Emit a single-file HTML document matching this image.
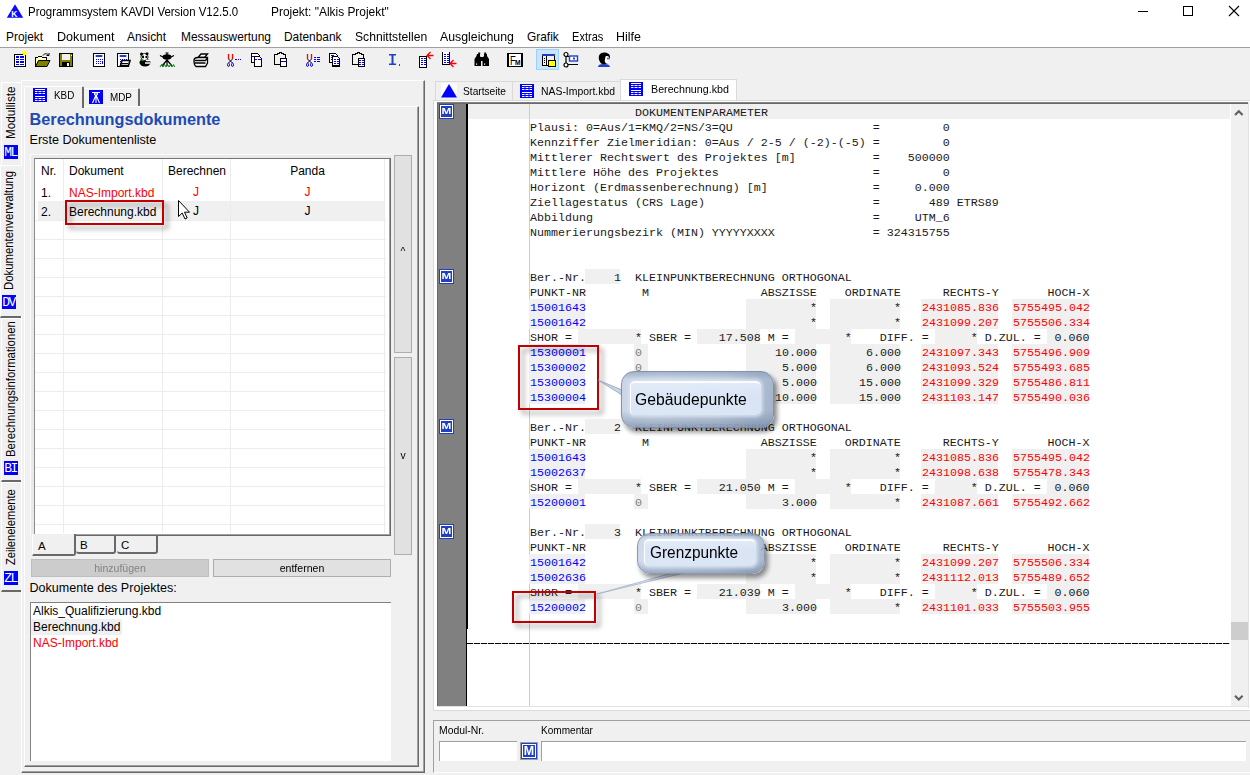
<!DOCTYPE html>
<html lang="de"><head><meta charset="utf-8"><title>Programmsystem KAVDI</title>
<style>
*{box-sizing:border-box;margin:0;padding:0}
html,body{width:1250px;height:775px;overflow:hidden;background:#f0f0f0}
body{position:relative;font-family:"Liberation Sans",sans-serif;font-size:12px;color:#000}
.a{position:absolute}
.t{position:absolute;white-space:pre;line-height:1}
.m{font-family:"Liberation Mono",monospace;font-size:11.667px;line-height:15px;white-space:pre;position:absolute;left:530px;height:15px;color:#1a1a1a}
.ms{font-size:11.5px;transform:scaleX(.897);transform-origin:0 0}
.msc{transform-origin:50% 0}
.g{position:absolute;background:#f0f0f0;height:15px}
.b{color:#0000ff}.r{color:#ff0000}.gr{color:#808080}
.hl{position:absolute;height:1px;background:#ececec}
.vl{position:absolute;width:1px;background:#ececec}
</style></head>
<body>
<div class="a" style="left:0;top:0;width:1250px;height:47px;background:#fff"></div>
<div class="a" style="left:0;top:47px;width:1250px;height:1px;background:#a0a0a0"></div>
<svg class="a" style="left:6px;top:4px" width="18" height="15" viewBox="0 0 18 15"><path d="M9 0.300 L17.200 13.800 L0.800 13.800 Z" fill="#0a0aff"/><text x="5.300" y="13" font-family="Liberation Sans,sans-serif" font-size="8.500" font-weight="bold" fill="#fff">K</text></svg>
<div class="t" style="left:28px;top:6px;font-size:12px;transform-origin:0 0;transform:scaleX(.953)">Programmsystem KAVDI Version V12.5.0</div>
<div class="t" style="left:271px;top:6px;font-size:12px;transform-origin:0 0;transform:scaleX(.993)">Projekt: "Alkis Projekt"</div>
<svg class="a" style="left:1130px;top:0" width="120" height="24" viewBox="0 0 120 24"><path d="M8 11.500h10" stroke="#000" fill="none"/><rect x="53.500" y="6.500" width="9" height="9" stroke="#000" fill="none"/><path d="M99 6l10 10M109 6L99 16" stroke="#000" stroke-width="1.100" fill="none"/></svg>
<div class="t" style="left:6px;top:31.5px;font-size:11.9px">Projekt</div>
<div class="t" style="left:57px;top:31.5px;font-size:11.9px;transform-origin:0 0;transform:scaleX(1.06)">Dokument</div>
<div class="t" style="left:127px;top:31.5px;font-size:11.9px">Ansicht</div>
<div class="t" style="left:181px;top:31.5px;font-size:11.9px">Messauswertung</div>
<div class="t" style="left:284px;top:31.5px;font-size:11.9px">Datenbank</div>
<div class="t" style="left:355px;top:31.5px;font-size:11.9px;transform-origin:0 0;transform:scaleX(1.02)">Schnittstellen</div>
<div class="t" style="left:440px;top:31.5px;font-size:11.9px;transform-origin:0 0;transform:scaleX(1.035)">Ausgleichung</div>
<div class="t" style="left:527px;top:31.5px;font-size:11.9px">Grafik</div>
<div class="t" style="left:572px;top:31.5px;font-size:11.9px;transform-origin:0 0;transform:scaleX(0.93)">Extras</div>
<div class="t" style="left:616px;top:31.5px;font-size:11.9px;transform-origin:0 0;transform:scaleX(1.05)">Hilfe</div>
<svg class="a" style="left:13px;top:51px" width="16" height="17" viewBox="0 0 16 17" shape-rendering="crispEdges"><rect x="1.500" y="3.500" width="11" height="12" fill="#fff" stroke="#000"/><path d="M3 6h3M7 6h4M3 8.500h3M7 8.500h4M3 11h3M7 11h4M3 13.500h3M7 13.500h4" stroke="#0000ff" stroke-width="1.300"/><path d="M11.5 0v5M9 2.5h5M9.5 0.5l4 4M13.5 0.5l-4 4" stroke="#ffff00" shape-rendering="auto"/></svg>
<svg class="a" style="left:35px;top:51px" width="16" height="17" viewBox="0 0 16 17" shape-rendering="crispEdges"><path d="M0.5 15.5V6.5h2l1-1h3l1 1h4v3" fill="#ffffc0" stroke="#000"/><path d="M0.5 15.5l3-6h11.5l-3 6z" fill="#808000" stroke="#000" shape-rendering="auto"/><path d="M8 4.5c1-2 4-2.500 5.500-0.500M14 2v2.500h-2.500" fill="none" stroke="#000" shape-rendering="auto"/></svg>
<svg class="a" style="left:58px;top:51px" width="16" height="17" viewBox="0 0 16 17" shape-rendering="crispEdges"><rect x="1.500" y="2.500" width="13" height="13" fill="#808000" stroke="#000"/><rect x="4" y="3" width="8" height="6" fill="#f0f0f0"/><rect x="4" y="11" width="8" height="4" fill="#000"/><rect x="9" y="12" width="2" height="3" fill="#f0f0f0"/><rect x="12.500" y="3.500" width="1" height="1" fill="#f0f0f0"/></svg>
<svg class="a" style="left:91px;top:51px" width="16" height="17" viewBox="0 0 16 17" shape-rendering="crispEdges"><rect x="2" y="2" width="12" height="14" fill="#000"/><rect x="3" y="3" width="10" height="12" fill="#fff"/><rect x="4.500" y="4" width="7" height="2" rx="0.800" fill="#2040c0" shape-rendering="auto"/><path d="M4.500 8.500h1M6.500 8.500h1M8.500 8.500h1M4.500 10.500h1M6.500 10.500h1M8.500 10.500h1M4.500 12.500h1M6.500 12.500h1M8.500 12.500h1M10.500 8.500h1" stroke="#0000ff"/><rect x="10.500" y="10" width="1" height="3" fill="#0000ff"/></svg>
<svg class="a" style="left:115px;top:51px" width="16" height="17" viewBox="0 0 16 17" shape-rendering="crispEdges"><rect x="2" y="2" width="12" height="14" fill="#000"/><rect x="3" y="3" width="10" height="12" fill="#fff"/><rect x="4.500" y="4" width="7" height="2" rx="0.800" fill="#2040c0" shape-rendering="auto"/><path d="M4.500 8.500h1M6.500 8.500h1M8.500 8.500h1M4.500 10.500h1M6.500 10.500h1M8.500 10.500h1M4.500 12.500h1M6.500 12.500h1M8.500 12.500h1M10.500 8.500h1" stroke="#0000ff"/><rect x="10.500" y="10" width="1" height="3" fill="#0000ff"/><path d="M5.500 14.500l1.500-5h8l-1.500 5z" fill="#fff" stroke="#000" stroke-width="1.600" shape-rendering="auto"/><path d="M7 12.500h6" stroke="#000"/></svg>
<svg class="a" style="left:138px;top:51px" width="16" height="17" viewBox="0 0 16 17" shape-rendering="crispEdges"><g shape-rendering="auto"><ellipse cx="7" cy="11.500" rx="5.500" ry="4" fill="#000"/><circle cx="6.500" cy="6" r="3.600" fill="#fff" stroke="#000" stroke-width="0.800"/><circle cx="3.500" cy="3" r="1.500" fill="#000"/><circle cx="9" cy="2.800" r="1.500" fill="#000"/><ellipse cx="5" cy="6" rx="1.100" ry="1.400" fill="#000"/><ellipse cx="8.300" cy="6" rx="1" ry="1.300" fill="#000"/><path d="M8 9.500h4.500M7 12h5.500" stroke="#fff" stroke-width="1.300"/><path d="M2.500 8.500l3 1.500" stroke="#00a000" stroke-width="1.300"/></g></svg>
<svg class="a" style="left:159px;top:51px" width="16" height="17" viewBox="0 0 16 17" shape-rendering="crispEdges"><g shape-rendering="auto"><ellipse cx="8" cy="6" rx="4.500" ry="2.800" fill="#000"/><path d="M8 1.500v3M6.500 2h3M1 4.500l3 1.500M15 4.500l-3 1.500M8 8v7M8 9l-5 6M8 9l5 6" stroke="#000" stroke-width="1.200" fill="none"/><path d="M1 16l1.500-2.500 1.500 2.500 1.500-2.500 1.500 2.500 1.500-2.500 1.500 2.500 1.500-2.500 1.500 2.500 1.500-2.500 1.500 2.500" stroke="#008000" stroke-width="1" fill="none"/></g></svg>
<svg class="a" style="left:193px;top:51px" width="16" height="17" viewBox="0 0 16 17" shape-rendering="crispEdges"><g shape-rendering="auto" fill="#fff" stroke="#000" stroke-width="1.300"><path d="M5 6.500l3-3.500h6.500l-3 3.500z"/><path d="M1 9.500c0-2 2-3 4-3h9.500v5.500l-2 3.500h-9.500c-1.500-1-2-3-2-6z"/><path d="M1.500 9.500h11M1.500 12h11M12.500 9.500l2-2.500" fill="none"/></g></svg>
<svg class="a" style="left:226px;top:51px" width="16" height="17" viewBox="0 0 16 17" shape-rendering="crispEdges"><g shape-rendering="auto"><path d="M2.500 3v5M6.500 3v5" stroke="#ff0000" stroke-width="1.300"/><path d="M2.500 8l4 4M6.500 8l-4 4" stroke="#000" stroke-width="1"/><ellipse cx="2.500" cy="13.800" rx="1" ry="1.700" fill="none" stroke="#0000ff" stroke-width="1"/><ellipse cx="6.500" cy="13.800" rx="1" ry="1.700" fill="none" stroke="#0000ff" stroke-width="1"/></g><path d="M9 8.500h2M12 8.500h1M14 8.500h1" stroke="#0000ff"/></svg>
<svg class="a" style="left:250px;top:51px" width="16" height="17" viewBox="0 0 16 17" shape-rendering="crispEdges"><path d="M1.500 2.500h6l2 2v7h-8z" fill="#fff" stroke="#000"/><path d="M4.500 5.500h5l2 2v7.500h-7z" fill="#fff" stroke="#000"/><path d="M2 5.500h2M5 8.500h2M8 8.500h3" stroke="#0000ff"/></svg>
<svg class="a" style="left:274px;top:51px" width="16" height="17" viewBox="0 0 16 17" shape-rendering="crispEdges"><rect x="0.500" y="3.500" width="11" height="10" fill="#f0f0f0" stroke="#000" stroke-width="1.400"/><path d="M3.500 3.500v-1.500h2v-1h1.500v1h2v1.500" fill="#f0f0f0" stroke="#000"/><rect x="6.500" y="7.500" width="6" height="8" fill="#fff" stroke="#000"/><path d="M7 10.500h5" stroke="#0000ff"/></svg>
<svg class="a" style="left:305px;top:51px" width="16" height="17" viewBox="0 0 16 17" shape-rendering="crispEdges"><g shape-rendering="auto"><path d="M2.500 3v5M6.500 3v5" stroke="#ff0000" stroke-width="1.300"/><path d="M2.500 8l4 4M6.500 8l-4 4" stroke="#000" stroke-width="1"/><ellipse cx="2.500" cy="13.800" rx="1" ry="1.700" fill="none" stroke="#0000ff" stroke-width="1"/><ellipse cx="6.500" cy="13.800" rx="1" ry="1.700" fill="none" stroke="#0000ff" stroke-width="1"/></g><path d="M9 6.500h2M12 6.500h3M9 8.500h2M12 8.500h3M9 10.500h2M12 10.500h3" stroke="#0000ff"/></svg>
<svg class="a" style="left:328px;top:51px" width="16" height="17" viewBox="0 0 16 17" shape-rendering="crispEdges"><path d="M1.500 2.500h6l2 2v7h-8z" fill="#fff" stroke="#000" stroke-width="1.400"/><path d="M3 4.500h3M3 6.500h4M3 8.500h4" stroke="#0000ff"/><path d="M4.500 5.500h5l2 2v7.500h-7z" fill="#fff" stroke="#000" stroke-width="1.400"/><path d="M6 8.500h2M9 8.500h2M6 10.500h2M9 10.500h2M6 12.500h2M9 12.500h2" stroke="#0000ff"/></svg>
<svg class="a" style="left:352px;top:51px" width="16" height="17" viewBox="0 0 16 17" shape-rendering="crispEdges"><rect x="0.500" y="3.500" width="11" height="10" fill="#f0f0f0" stroke="#000" stroke-width="1.400"/><path d="M3.500 3.500v-1.500h2v-1h1.500v1h2v1.500" fill="#f0f0f0" stroke="#000"/><rect x="6.500" y="7.500" width="6" height="8" fill="#fff" stroke="#000"/><path d="M7 9.500h2M10 9.500h2M7 11.500h2M10 11.500h2M7 13.500h2M10 13.500h2" stroke="#0000ff"/></svg>
<svg class="a" style="left:387px;top:51px" width="16" height="17" viewBox="0 0 16 17" shape-rendering="crispEdges"><path d="M2 3h7v1.500h-2.500v8h2.500v1.500h-7v-1.500h2.500v-8h-2.500z" fill="#2040c0" shape-rendering="auto"/><rect x="12" y="13" width="1" height="2" fill="#008000"/></svg>
<svg class="a" style="left:418px;top:51px" width="16" height="17" viewBox="0 0 16 17" shape-rendering="crispEdges"><rect x="1.500" y="5.500" width="7" height="11" fill="#fff" stroke="#000"/><path d="M3 7.500h2M6 7.500h2M3 9.500h2M6 9.500h2M3 11.500h2M6 11.500h2M3 13.500h2M6 13.500h2" stroke="#0000ff"/><path d="M9 4.500h6.500M12.500 1l-3.500 3.500l3.500 3.500" fill="none" stroke="#ff0000" stroke-width="1.300" shape-rendering="auto"/></svg>
<svg class="a" style="left:441px;top:51px" width="16" height="17" viewBox="0 0 16 17" shape-rendering="crispEdges"><path d="M1.500 1v12.500h7v-12.500" fill="#fff" stroke="#000" stroke-width="1.300"/><path d="M3 3.500h2M6 3.500h2M3 5.500h2M6 5.500h2M3 7.500h2M6 7.500h2M3 9.500h2M6 9.500h2M3 11.500h2M6 11.500h2" stroke="#0000ff"/><path d="M9 12.500h6.500M12.500 9l-3.500 3.500l3.500 3.500" fill="none" stroke="#ff0000" stroke-width="1.300" shape-rendering="auto"/></svg>
<svg class="a" style="left:474px;top:51px" width="16" height="17" viewBox="0 0 16 17" shape-rendering="crispEdges"><g shape-rendering="auto" fill="#000"><path d="M3 3h3v2l1 2v8h-6.500v-7l2-3z"/><path d="M10 3h3v2l2 3v7h-6.500v-8l1.500-2z"/><rect x="6" y="6" width="4" height="4"/><rect x="4.200" y="1.500" width="2" height="2"/><rect x="10.200" y="1.500" width="2" height="2"/><rect x="2" y="12.500" width="1.200" height="1.200" fill="#fff"/><rect x="10" y="12.500" width="1.200" height="1.200" fill="#fff"/></g></svg>
<svg class="a" style="left:507px;top:51px" width="16" height="17" viewBox="0 0 16 17" shape-rendering="crispEdges"><rect x="0.750" y="2.250" width="14" height="13" fill="#fff" stroke="#000" stroke-width="1.500"/><g shape-rendering="auto" font-family="Liberation Sans,sans-serif" fill="#000"><text transform="translate(3 13.800) scale(0.700 1)" font-size="13.500">F</text><text transform="translate(8 13.800) scale(0.850 1)" font-size="7.800" font-weight="bold">M</text></g></svg>
<div class="a" style="left:536px;top:49px;width:23px;height:21px;background:#cce4f7;border:1px solid #99d1ff"></div><svg class="a" style="left:541px;top:51px" width="16" height="17" viewBox="0 0 16 17" shape-rendering="crispEdges"><rect x="1.500" y="3.500" width="12" height="11" fill="#f0f0f0" stroke="#000" stroke-width="1.400"/><rect x="1" y="3" width="13" height="2" fill="#2040c0"/><path d="M5.500 5v9" stroke="#000"/><path d="M3.500 7v1M3.500 9v1M3.500 11v1" stroke="#000"/><rect x="7.500" y="9.500" width="7" height="6" fill="#ffff00" stroke="#000"/></svg>
<svg class="a" style="left:563px;top:51px" width="16" height="17" viewBox="0 0 16 17" shape-rendering="crispEdges"><g shape-rendering="auto" fill="#fff" stroke="#000" stroke-width="1.200"><path d="M3 4v10M3 5.500h12M3 13.500h12" fill="none"/><circle cx="3" cy="3.500" r="2"/><circle cx="3" cy="14" r="2"/><rect x="6.500" y="5" width="8" height="5" fill="#fff" stroke="#2040c0" stroke-width="1.400"/><rect x="10" y="6.500" width="2" height="2" fill="#2040c0" stroke="none"/></g></svg>
<svg class="a" style="left:597px;top:51px" width="16" height="17" viewBox="0 0 16 17" shape-rendering="crispEdges"><g shape-rendering="auto"><path d="M1 16c0-2 2-3 5-3h2c3 0 4.500 1 5 3z" fill="#2040c0"/><path d="M7 1.500c-4 0-6 3-5 7c0.500 2 1.500 3.500 3 4.500h4c3-1 4-4 4-7c0-3-2.500-4.500-6-4.500z" fill="#000"/><path d="M8.500 5.500c2-1 4 0 4 2.500l0.800 1.500-1 0.500c0 1.500-0.500 2.500-2.500 2.500c-1.500 0-2-1.500-2-3z" fill="#fff"/><circle cx="11" cy="7.500" r="0.900" fill="#2040c0"/></g></svg>
<div class="a" style="left:1px;top:82px;width:20px;height:83px;background:#f0f0f0;border-left:1px solid #fff;border-top:1px solid #fff;"></div><div class="t" style="left:4.6px;top:138.5px;font-size:12.600px;line-height:13px;transform-origin:0 0;transform:rotate(-90deg) scaleX(0.925)">Modulliste</div><div class="a" style="left:4px;top:145px;width:14px;height:14px;background:#0000ff"></div><div class="t" style="left:4px;top:145px;width:14px;text-align:center;font-family:'Liberation Mono',monospace;font-size:13px;letter-spacing:-1.6px;text-indent:-1px;color:#fff;line-height:15px">ML</div>
<div class="a" style="left:1px;top:318px;width:20px;height:164px;background:#f0f0f0;border-left:1px solid #fff;border-top:1px solid #fff;border-bottom:2px solid #696969;"></div><div class="t" style="left:4.6px;top:457px;font-size:12.600px;line-height:13px;transform-origin:0 0;transform:rotate(-90deg) scaleX(0.903)">Berechnungsinformationen</div><div class="a" style="left:4px;top:461px;width:14px;height:14px;background:#0000ff"></div><div class="t" style="left:4px;top:461px;width:14px;text-align:center;font-family:'Liberation Mono',monospace;font-size:13px;letter-spacing:-1.6px;text-indent:-1px;color:#fff;line-height:15px">BI</div>
<div class="a" style="left:1px;top:482px;width:20px;height:110px;background:#f0f0f0;border-left:1px solid #fff;border-top:1px solid #fff;border-bottom:2px solid #696969;"></div><div class="t" style="left:4.6px;top:564.5px;font-size:12.600px;line-height:13px;transform-origin:0 0;transform:rotate(-90deg) scaleX(0.88)">Zeilenelemente</div><div class="a" style="left:4px;top:571px;width:14px;height:14px;background:#0000ff"></div><div class="t" style="left:4px;top:571px;width:14px;text-align:center;font-family:'Liberation Mono',monospace;font-size:13px;letter-spacing:-1.6px;text-indent:-1px;color:#fff;line-height:15px">ZL</div>
<div class="a" style="left:0px;top:165px;width:22px;height:153px;background:#f0f0f0;border-left:1px solid #fff;border-top:1px solid #fff;border-bottom:2px solid #696969;"></div><div class="t" style="left:2.6px;top:289.5px;font-size:12.600px;line-height:13px;transform-origin:0 0;transform:rotate(-90deg) scaleX(0.9)">Dokumentenverwaltung</div><div class="a" style="left:2px;top:295px;width:14px;height:14px;background:#0000ff"></div><div class="t" style="left:2px;top:295px;width:14px;text-align:center;font-family:'Liberation Mono',monospace;font-size:13px;letter-spacing:-1.6px;text-indent:-1px;color:#fff;line-height:15px">DV</div>
<div class="a" style="left:21px;top:80px;width:404px;height:693px;border-left:1px solid #fff;border-top:1px solid #fff;border-right:1px solid #696969;border-bottom:1px solid #696969;box-shadow:inset -1px -1px 0 #a0a0a0"></div>
<div class="a" style="left:21px;top:166px;width:1px;height:150px;background:#f0f0f0"></div><div class="a" style="left:24px;top:106px;width:395px;height:661px;border-left:1px solid #fff;border-top:1px solid #fff;border-right:1px solid #696969;border-bottom:1px solid #696969;box-shadow:inset -1px -1px 0 #a0a0a0"></div>
<div class="a" style="left:24px;top:86px;width:60px;height:22px;background:#f0f0f0;border-left:1px solid #fff;border-top:1px solid #fff;border-right:2px solid #696969;border-radius:2px 2px 0 0"></div><div class="a" style="left:84px;top:88px;width:56px;height:18px;background:#f0f0f0;border-top:1px solid #fff;border-right:2px solid #696969;border-radius:0 2px 0 0"></div>
<svg class="a" style="left:33px;top:88px" width="14" height="14" viewBox="0 0 14 14"><rect width="14" height="14" fill="#0000ff"/><path d="M2 1.500h10M2 8.500h10" stroke="#fff" stroke-width="1.200" fill="none"/><path d="M2 3.500h2.500M5.500 3.500h3M9.500 3.500h2.500M2 5.500h2.500M5.500 5.500h3M9.500 5.500h2.500M2 10.500h2.500M5.500 10.500h3M9.500 10.500h2.500M2 12.500h2.500M5.500 12.500h3M9.500 12.500h2.500" stroke="#fff" stroke-width="1.100" fill="none"/></svg><div class="t ms" style="left:54px;top:89.900px;transform:scaleX(0.858)">KBD</div><svg class="a" style="left:89px;top:90px" width="14" height="14" viewBox="0 0 14 14"><rect width="14" height="14" fill="#0000ff"/><path d="M3 2.5h8M7 2v3M7 5L3.5 13M7 5l3.5 8M7 5v8" stroke="#fff" stroke-width="1.1" fill="none"/><circle cx="7" cy="4" r="1.6" fill="none" stroke="#fff"/></svg><div class="t ms" style="left:110px;top:91.900px;transform:scaleX(0.858)">MDP</div>
<div class="t" style="left:29.500px;top:111px;font-size:16.300px;font-weight:bold;color:#1e4ab4">Berechnungsdokumente</div><div class="t" style="left:29.500px;top:134px;font-size:12.620px">Erste Dokumentenliste</div>
<div class="a" style="left:30px;top:154px;width:361px;height:382px;background:#e9e9e9;border-left:1px solid #fbfbfb;border-top:1px solid #fbfbfb"></div><div class="a" style="left:34px;top:158px;width:357px;height:378px;background:#fff;border-left:1px solid #8c8c8c;border-top:1px solid #767676;border-right:1px solid #696969;border-bottom:1px solid #696969"></div><div class="a" style="left:35px;top:534px;width:355px;height:1px;background:#a0a0a0"></div><div class="a" style="left:389px;top:159px;width:1px;height:376px;background:#a0a0a0"></div>
<div class="a" style="left:38px;top:201px;width:347px;height:19px;background:#f0f0f0"></div><div class="hl" style="left:35px;top:220px;width:351px"></div><div class="hl" style="left:35px;top:239px;width:351px"></div><div class="hl" style="left:35px;top:258px;width:351px"></div><div class="hl" style="left:35px;top:277px;width:351px"></div><div class="hl" style="left:35px;top:296px;width:351px"></div><div class="hl" style="left:35px;top:315px;width:351px"></div><div class="hl" style="left:35px;top:334px;width:351px"></div><div class="hl" style="left:35px;top:353px;width:351px"></div><div class="hl" style="left:35px;top:372px;width:351px"></div><div class="hl" style="left:35px;top:391px;width:351px"></div><div class="hl" style="left:35px;top:410px;width:351px"></div><div class="hl" style="left:35px;top:429px;width:351px"></div><div class="hl" style="left:35px;top:448px;width:351px"></div><div class="hl" style="left:35px;top:467px;width:351px"></div><div class="hl" style="left:35px;top:486px;width:351px"></div><div class="hl" style="left:35px;top:505px;width:351px"></div><div class="hl" style="left:35px;top:524px;width:351px"></div>
<div class="vl" style="left:63px;top:159px;height:374px"></div><div class="vl" style="left:162px;top:159px;height:374px"></div><div class="vl" style="left:230px;top:159px;height:374px"></div><div class="vl" style="left:384px;top:159px;height:374px"></div>
<div class="t" style="left:41px;top:164.800px;font-size:12px">Nr.</div><div class="t" style="left:69px;top:164.800px;font-size:12px">Dokument</div><div class="t" style="left:168px;top:164.800px;font-size:12px">Berechnen</div><div class="t" style="left:230px;top:165px;width:155px;text-align:center;font-size:12px">Panda</div>
<div class="t" style="left:41px;top:186.500px;font-size:12px">1.</div><div class="t r" style="left:69px;top:186.500px;font-size:12px">NAS-Import.kbd</div><div class="t r" style="left:162px;top:186px;width:68px;text-align:center;font-size:12px">J</div><div class="t r" style="left:230px;top:186px;width:155px;text-align:center;font-size:12px">J</div>
<div class="t" style="left:41px;top:205.500px;font-size:12px">2.</div><div class="t" style="left:69px;top:205.500px;font-size:12px">Berechnung.kbd</div><div class="t" style="left:162px;top:205px;width:68px;text-align:center;font-size:12px">J</div><div class="t" style="left:230px;top:205px;width:155px;text-align:center;font-size:12px">J</div>
<div class="a" style="left:394px;top:155px;width:18px;height:198px;background:#e1e1e1;border:1px solid #adadad"></div><div class="a" style="left:394px;top:357px;width:18px;height:198px;background:#e1e1e1;border:1px solid #adadad"></div><div class="t ms msc" style="left:394px;top:245.900px;width:18px;text-align:center;transform:scaleX(0.897)">^</div><div class="t ms msc" style="left:394px;top:450.400px;width:18px;text-align:center;transform:scaleX(0.897)">v</div>
<div class="a" style="left:32px;top:534px;width:44px;height:22px;background:#f0f0f0;border-left:1px solid #fff;border-right:2px solid #696969;border-bottom:2px solid #696969;border-radius:0 0 3px 0"></div><div class="a" style="left:76px;top:536px;width:40px;height:18px;background:#f0f0f0;border-right:2px solid #696969;border-bottom:2px solid #696969;border-radius:0 0 3px 3px"></div><div class="a" style="left:117px;top:536px;width:41px;height:18px;background:#f0f0f0;border-right:2px solid #696969;border-bottom:2px solid #696969;border-radius:0 0 3px 3px"></div><div class="t" style="left:38px;top:541px;font-size:11.500px">A</div><div class="t" style="left:80px;top:539.500px;font-size:11.500px">B</div><div class="t" style="left:121px;top:539.500px;font-size:11.500px">C</div>
<div class="a" style="left:31px;top:559px;width:178px;height:18px;background:#cccccc;border:1px solid #bfbfbf"></div><div class="t ms msc" style="left:31px;top:563.200px;width:178px;text-align:center;color:#838383;transform:scaleX(0.918)">hinzufügen</div><div class="a" style="left:213px;top:559px;width:178px;height:18px;background:#e1e1e1;border:1px solid #adadad"></div><div class="t ms msc" style="left:213px;top:563.200px;width:178px;text-align:center;transform:scaleX(0.918)">entfernen</div>
<div class="t" style="left:29.500px;top:581.500px;font-size:12.560px">Dokumente des Projektes:</div>
<div class="a" style="left:30px;top:602px;width:361px;height:159px;background:#fff;border-left:1px solid #828282;border-top:1px solid #828282"></div><div class="a" style="left:31px;top:619px;width:91px;height:16px;background:#f0f0f0"></div><div class="t" style="left:33px;top:605px;font-size:12px">Alkis_Qualifizierung.kbd</div><div class="t" style="left:33px;top:621px;font-size:12px">Berechnung.kbd</div><div class="t r" style="left:33px;top:637px;font-size:12px">NAS-Import.kbd</div>
<div class="a" style="left:435px;top:81px;width:78px;height:20px;background:#f0f0f0;border:1px solid #d9d9d9"></div><div class="a" style="left:512px;top:81px;width:109px;height:20px;background:#f0f0f0;border:1px solid #d9d9d9"></div><div class="a" style="left:620px;top:79px;width:117px;height:23px;background:#fff;border:1px solid #d9d9d9;border-bottom:none"></div>
<svg class="a" style="left:441px;top:83px" width="16" height="15" viewBox="0 0 16 15"><rect width="16" height="15" fill="#fbfbfb"/><path d="M8 1L16 14.500H0Z" fill="#0000ff"/></svg><div class="t ms" style="left:463px;top:85.900px;transform:scaleX(0.886)">Startseite</div><svg class="a" style="left:520px;top:84px" width="14" height="14" viewBox="0 0 14 14"><rect width="14" height="14" fill="#0000ff"/><path d="M2 1.500h10M2 8.500h10" stroke="#fff" stroke-width="1.200" fill="none"/><path d="M2 3.500h2.500M5.500 3.500h3M9.500 3.500h2.500M2 5.500h2.500M5.500 5.500h3M9.500 5.500h2.500M2 10.500h2.500M5.500 10.500h3M9.500 10.500h2.500M2 12.500h2.500M5.500 12.500h3M9.500 12.500h2.500" stroke="#fff" stroke-width="1.100" fill="none"/></svg><div class="t ms" style="left:541px;top:85.900px;transform:scaleX(0.904)">NAS-Import.kbd</div><svg class="a" style="left:629px;top:82px" width="14" height="14" viewBox="0 0 14 14"><rect width="14" height="14" fill="#0000ff"/><path d="M2 1.500h10M2 8.500h10" stroke="#fff" stroke-width="1.200" fill="none"/><path d="M2 3.500h2.500M5.500 3.500h3M9.500 3.500h2.500M2 5.500h2.500M5.500 5.500h3M9.500 5.500h2.500M2 10.500h2.500M5.500 10.500h3M9.500 10.500h2.500M2 12.500h2.500M5.500 12.500h3M9.500 12.500h2.500" stroke="#fff" stroke-width="1.100" fill="none"/></svg><div class="t ms" style="left:650.5px;top:83.900px;transform:scaleX(0.930)">Berechnung.kbd</div>
<div class="a" style="left:433px;top:100px;width:817px;height:611px;background:#fff;border:1px solid #dadada;border-right:none"></div>
<div class="a" style="left:437px;top:102px;width:811px;height:605px;background:#fff;border-left:1px solid #696969;border-top:2px solid #696969;border-top-color:#828282"></div><div class="a" style="left:437px;top:103px;width:811px;height:1px;background:#696969"></div><div class="a" style="left:1248px;top:102px;width:1px;height:606px;background:#e3e3e3"></div><div class="a" style="left:437px;top:706px;width:812px;height:1px;background:#e3e3e3"></div>
<div class="a" style="left:438px;top:104px;width:28px;height:602px;background:#808080"></div>
<div class="a" style="left:466px;top:104px;width:2px;height:525px;background:#000"></div>
<div class="a" style="left:466px;top:629px;width:1px;height:77px;background:#000"></div>
<div class="a" style="left:468px;top:104px;width:762px;height:15px;background:#f0f0f0"></div>
<div class="a" style="left:529px;top:104px;width:1px;height:602px;background:#cdcdcd"></div>
<div class="a" style="left:1231px;top:104px;width:17px;height:602px;background:#f0f0f0"></div>
<div class="a" style="left:1231px;top:622px;width:17px;height:18px;background:#cdcdcd"></div>
<svg class="a" style="left:1231px;top:104px" width="17" height="17" viewBox="0 0 17 17"><path d="M4 11L7.800 7.200L11.600 11" stroke="#606060" stroke-width="2.100" fill="none"/></svg>
<svg class="a" style="left:1231px;top:690px" width="17" height="17" viewBox="0 0 17 17"><path d="M4 5.800L7.800 9.600L11.600 5.800" stroke="#606060" stroke-width="2.100" fill="none"/></svg>
<div class="m" style="left:635px;top:106px">DOKUMENTENPARAMETER</div>
<div class="m" style="left:530px;top:121px">Plausi: 0=Aus/1=KMQ/2=NS/3=QU                    =         0</div>
<div class="m" style="left:530px;top:136px">Kennziffer Zielmeridian: 0=Aus / 2-5 / (-2)-(-5) =         0</div>
<div class="m" style="left:530px;top:151px">Mittlerer Rechtswert des Projektes [m]           =    500000</div>
<div class="m" style="left:530px;top:166px">Mittlere Höhe des Projektes                      =         0</div>
<div class="m" style="left:530px;top:181px">Horizont (Erdmassenberechnung) [m]               =     0.000</div>
<div class="m" style="left:530px;top:196px">Ziellagestatus (CRS Lage)                        =       489 ETRS89</div>
<div class="m" style="left:530px;top:211px">Abbildung                                        =     UTM_6</div>
<div class="m" style="left:530px;top:226px">Nummerierungsbezirk (MIN) YYYYYXXXX              = 324315755</div>
<div class="g" style="left:585px;top:269px;width:35px"></div><div class="m" style="left:530px;top:271px">Ber.-Nr.    1  KLEINPUNKTBERECHNUNG ORTHOGONAL</div>
<div class="m" style="left:530px;top:286px">PUNKT-NR        M                ABSZISSE    ORDINATE      RECHTS-Y       HOCH-X</div>
<div class="g" style="left:529px;top:299px;width:56px"></div><div class="g" style="left:746px;top:299px;width:70px"></div><div class="g" style="left:830px;top:299px;width:70px"></div><div class="g" style="left:921px;top:299px;width:77px"></div><div class="g" style="left:1012px;top:299px;width:77px"></div><div class="m b" style="left:530px;top:301px">15001643</div><div class="m" style="left:810px;top:301px">*</div><div class="m" style="left:894px;top:301px">*</div><div class="m r" style="left:922px;top:301px">2431085.836</div><div class="m r" style="left:1013px;top:301px">5755495.042</div>
<div class="g" style="left:529px;top:314px;width:56px"></div><div class="g" style="left:746px;top:314px;width:70px"></div><div class="g" style="left:830px;top:314px;width:70px"></div><div class="g" style="left:921px;top:314px;width:77px"></div><div class="g" style="left:1012px;top:314px;width:77px"></div><div class="m b" style="left:530px;top:316px">15001642</div><div class="m" style="left:810px;top:316px">*</div><div class="m" style="left:894px;top:316px">*</div><div class="m r" style="left:922px;top:316px">2431099.207</div><div class="m r" style="left:1013px;top:316px">5755506.334</div>
<div class="g" style="left:578px;top:329px;width:63px"></div><div class="g" style="left:697px;top:329px;width:63px"></div><div class="g" style="left:795px;top:329px;width:56px"></div><div class="g" style="left:935px;top:329px;width:42px"></div><div class="g" style="left:1047px;top:329px;width:42px"></div><div class="m" style="left:530px;top:331px">SHOR =         * SBER =    17.508 M =        *    DIFF. =      * D.ZUL. =  0.060</div>
<div class="g" style="left:529px;top:344px;width:56px"></div><div class="g" style="left:634px;top:344px;width:14px"></div><div class="g" style="left:746px;top:344px;width:70px"></div><div class="g" style="left:830px;top:344px;width:70px"></div><div class="g" style="left:921px;top:344px;width:77px"></div><div class="g" style="left:1012px;top:344px;width:77px"></div><div class="m b" style="left:530px;top:346px">15300001</div><div class="m gr" style="left:635px;top:346px">0</div><div class="m" style="left:747px;top:346px">    10.000</div><div class="m" style="left:831px;top:346px">     6.000</div><div class="m r" style="left:922px;top:346px">2431097.343</div><div class="m r" style="left:1013px;top:346px">5755496.909</div>
<div class="g" style="left:529px;top:359px;width:56px"></div><div class="g" style="left:634px;top:359px;width:14px"></div><div class="g" style="left:746px;top:359px;width:70px"></div><div class="g" style="left:830px;top:359px;width:70px"></div><div class="g" style="left:921px;top:359px;width:77px"></div><div class="g" style="left:1012px;top:359px;width:77px"></div><div class="m b" style="left:530px;top:361px">15300002</div><div class="m gr" style="left:635px;top:361px">0</div><div class="m" style="left:747px;top:361px">     5.000</div><div class="m" style="left:831px;top:361px">     6.000</div><div class="m r" style="left:922px;top:361px">2431093.524</div><div class="m r" style="left:1013px;top:361px">5755493.685</div>
<div class="g" style="left:529px;top:374px;width:56px"></div><div class="g" style="left:634px;top:374px;width:14px"></div><div class="g" style="left:746px;top:374px;width:70px"></div><div class="g" style="left:830px;top:374px;width:70px"></div><div class="g" style="left:921px;top:374px;width:77px"></div><div class="g" style="left:1012px;top:374px;width:77px"></div><div class="m b" style="left:530px;top:376px">15300003</div><div class="m gr" style="left:635px;top:376px">0</div><div class="m" style="left:747px;top:376px">     5.000</div><div class="m" style="left:831px;top:376px">    15.000</div><div class="m r" style="left:922px;top:376px">2431099.329</div><div class="m r" style="left:1013px;top:376px">5755486.811</div>
<div class="g" style="left:529px;top:389px;width:56px"></div><div class="g" style="left:634px;top:389px;width:14px"></div><div class="g" style="left:746px;top:389px;width:70px"></div><div class="g" style="left:830px;top:389px;width:70px"></div><div class="g" style="left:921px;top:389px;width:77px"></div><div class="g" style="left:1012px;top:389px;width:77px"></div><div class="m b" style="left:530px;top:391px">15300004</div><div class="m gr" style="left:635px;top:391px">0</div><div class="m" style="left:747px;top:391px">    10.000</div><div class="m" style="left:831px;top:391px">    15.000</div><div class="m r" style="left:922px;top:391px">2431103.147</div><div class="m r" style="left:1013px;top:391px">5755490.036</div>
<div class="g" style="left:585px;top:419px;width:35px"></div><div class="m" style="left:530px;top:421px">Ber.-Nr.    2  KLEINPUNKTBERECHNUNG ORTHOGONAL</div>
<div class="m" style="left:530px;top:436px">PUNKT-NR        M                ABSZISSE    ORDINATE      RECHTS-Y       HOCH-X</div>
<div class="g" style="left:529px;top:449px;width:56px"></div><div class="g" style="left:746px;top:449px;width:70px"></div><div class="g" style="left:830px;top:449px;width:70px"></div><div class="g" style="left:921px;top:449px;width:77px"></div><div class="g" style="left:1012px;top:449px;width:77px"></div><div class="m b" style="left:530px;top:451px">15001643</div><div class="m" style="left:810px;top:451px">*</div><div class="m" style="left:894px;top:451px">*</div><div class="m r" style="left:922px;top:451px">2431085.836</div><div class="m r" style="left:1013px;top:451px">5755495.042</div>
<div class="g" style="left:529px;top:464px;width:56px"></div><div class="g" style="left:746px;top:464px;width:70px"></div><div class="g" style="left:830px;top:464px;width:70px"></div><div class="g" style="left:921px;top:464px;width:77px"></div><div class="g" style="left:1012px;top:464px;width:77px"></div><div class="m b" style="left:530px;top:466px">15002637</div><div class="m" style="left:810px;top:466px">*</div><div class="m" style="left:894px;top:466px">*</div><div class="m r" style="left:922px;top:466px">2431098.638</div><div class="m r" style="left:1013px;top:466px">5755478.343</div>
<div class="g" style="left:578px;top:479px;width:63px"></div><div class="g" style="left:697px;top:479px;width:63px"></div><div class="g" style="left:795px;top:479px;width:56px"></div><div class="g" style="left:935px;top:479px;width:42px"></div><div class="g" style="left:1047px;top:479px;width:42px"></div><div class="m" style="left:530px;top:481px">SHOR =         * SBER =    21.050 M =        *    DIFF. =      * D.ZUL. =  0.060</div>
<div class="g" style="left:529px;top:494px;width:56px"></div><div class="g" style="left:634px;top:494px;width:14px"></div><div class="g" style="left:746px;top:494px;width:70px"></div><div class="g" style="left:830px;top:494px;width:70px"></div><div class="g" style="left:921px;top:494px;width:77px"></div><div class="g" style="left:1012px;top:494px;width:77px"></div><div class="m b" style="left:530px;top:496px">15200001</div><div class="m gr" style="left:635px;top:496px">0</div><div class="m" style="left:747px;top:496px">     3.000</div><div class="m" style="left:831px;top:496px">         *</div><div class="m r" style="left:922px;top:496px">2431087.661</div><div class="m r" style="left:1013px;top:496px">5755492.662</div>
<div class="g" style="left:585px;top:524px;width:35px"></div><div class="m" style="left:530px;top:526px">Ber.-Nr.    3  KLEINPUNKTBERECHNUNG ORTHOGONAL</div>
<div class="m" style="left:530px;top:541px">PUNKT-NR        M                ABSZISSE    ORDINATE      RECHTS-Y       HOCH-X</div>
<div class="g" style="left:529px;top:554px;width:56px"></div><div class="g" style="left:746px;top:554px;width:70px"></div><div class="g" style="left:830px;top:554px;width:70px"></div><div class="g" style="left:921px;top:554px;width:77px"></div><div class="g" style="left:1012px;top:554px;width:77px"></div><div class="m b" style="left:530px;top:556px">15001642</div><div class="m" style="left:810px;top:556px">*</div><div class="m" style="left:894px;top:556px">*</div><div class="m r" style="left:922px;top:556px">2431099.207</div><div class="m r" style="left:1013px;top:556px">5755506.334</div>
<div class="g" style="left:529px;top:569px;width:56px"></div><div class="g" style="left:746px;top:569px;width:70px"></div><div class="g" style="left:830px;top:569px;width:70px"></div><div class="g" style="left:921px;top:569px;width:77px"></div><div class="g" style="left:1012px;top:569px;width:77px"></div><div class="m b" style="left:530px;top:571px">15002636</div><div class="m" style="left:810px;top:571px">*</div><div class="m" style="left:894px;top:571px">*</div><div class="m r" style="left:922px;top:571px">2431112.013</div><div class="m r" style="left:1013px;top:571px">5755489.652</div>
<div class="g" style="left:578px;top:584px;width:63px"></div><div class="g" style="left:697px;top:584px;width:63px"></div><div class="g" style="left:795px;top:584px;width:56px"></div><div class="g" style="left:935px;top:584px;width:42px"></div><div class="g" style="left:1047px;top:584px;width:42px"></div><div class="m" style="left:530px;top:586px">SHOR =         * SBER =    21.039 M =        *    DIFF. =      * D.ZUL. =  0.060</div>
<div class="g" style="left:529px;top:599px;width:56px"></div><div class="g" style="left:634px;top:599px;width:14px"></div><div class="g" style="left:746px;top:599px;width:70px"></div><div class="g" style="left:830px;top:599px;width:70px"></div><div class="g" style="left:921px;top:599px;width:77px"></div><div class="g" style="left:1012px;top:599px;width:77px"></div><div class="m b" style="left:530px;top:601px">15200002</div><div class="m gr" style="left:635px;top:601px">0</div><div class="m" style="left:747px;top:601px">     3.000</div><div class="m" style="left:831px;top:601px">         *</div><div class="m r" style="left:922px;top:601px">2431101.033</div><div class="m r" style="left:1013px;top:601px">5755503.955</div>
<div class="a" style="left:467px;top:643px;width:763px;height:1px;background:repeating-linear-gradient(90deg,#000 0,#000 6px,#e9c9a0 6px,#e9c9a0 7px)"></div>
<div class="a" style="left:439px;top:104px;width:15px;height:15px;background:#2040c0;border:1px solid #2040c0;box-shadow:inset 0 0 0 1px #fff"></div><div class="t" style="left:439px;top:106px;width:15px;text-align:center;font-size:9.8px;font-weight:bold;color:#fff;line-height:10px;transform:scaleX(1.2)">M</div>
<div class="a" style="left:439px;top:269px;width:15px;height:15px;background:#2040c0;border:1px solid #2040c0;box-shadow:inset 0 0 0 1px #fff"></div><div class="t" style="left:439px;top:271px;width:15px;text-align:center;font-size:9.8px;font-weight:bold;color:#fff;line-height:10px;transform:scaleX(1.2)">M</div>
<div class="a" style="left:439px;top:419px;width:15px;height:15px;background:#2040c0;border:1px solid #2040c0;box-shadow:inset 0 0 0 1px #fff"></div><div class="t" style="left:439px;top:421px;width:15px;text-align:center;font-size:9.8px;font-weight:bold;color:#fff;line-height:10px;transform:scaleX(1.2)">M</div>
<div class="a" style="left:439px;top:524px;width:15px;height:15px;background:#2040c0;border:1px solid #2040c0;box-shadow:inset 0 0 0 1px #fff"></div><div class="t" style="left:439px;top:526px;width:15px;text-align:center;font-size:9.8px;font-weight:bold;color:#fff;line-height:10px;transform:scaleX(1.2)">M</div>
<div class="a" style="left:433px;top:720px;width:817px;height:53px;border-top:1px solid #a0a0a0;border-left:1px solid #a0a0a0;border-bottom:1px solid #fff"></div>
<div class="t ms" style="left:439px;top:725px;transform:scaleX(0.903)">Modul-Nr.</div><div class="t ms" style="left:541px;top:725px;transform:scaleX(0.874)">Kommentar</div>
<div class="a" style="left:439px;top:741px;width:78px;height:20px;background:#fff;border-top:1px solid #a0a0a0;border-left:1px solid #a0a0a0"></div><div class="a" style="left:541px;top:741px;width:705px;height:20px;background:#fff;border-top:1px solid #a0a0a0;border-left:1px solid #a0a0a0"></div>
<div class="a" style="left:520px;top:742px;width:18px;height:18px;background:#2040c0;border:1px solid #a0a0a0"></div><div class="a" style="left:522px;top:744px;width:14px;height:14px;border:1px solid #fff"></div><div class="t" style="left:522px;top:745px;width:14px;text-align:center;font-size:12px;font-weight:bold;color:#fff;line-height:12px;transform:scaleX(1.040)">M</div>
<div class="a" style="left:65px;top:200px;width:99px;height:25px;border:2px solid #c00000;filter:drop-shadow(4px 4px 2.500px rgba(0,0,0,0.42))"></div>
<div class="a" style="left:518px;top:345px;width:81px;height:65px;border:2px solid #c00000;filter:drop-shadow(4px 4px 2.500px rgba(0,0,0,0.42))"></div>
<div class="a" style="left:512px;top:591px;width:84px;height:32px;border:2px solid #c00000;filter:drop-shadow(4px 4px 2.500px rgba(0,0,0,0.42))"></div>
<svg class="a" style="left:0;top:0" width="1250" height="775" viewBox="0 0 1250 775"><path d="M598 380 L622 390 L622 395 Z" fill="#c3d1e4" fill-opacity="0.9" stroke="#8397b3" stroke-width="0.700"/><path d="M597 594 L672 573 L684 573 Z" fill="#c9d6e8" fill-opacity="0.750" stroke="#93a6c0" stroke-width="0.600"/></svg>
<div class="a" style="left:621px;top:371px;width:153px;height:57px;border-radius:13px;border:1px solid #7b8da8;background:linear-gradient(180deg,rgba(120,140,170,.55) 0%,rgba(150,168,195,0) 14%,rgba(150,168,195,0) 70%,rgba(95,115,148,.55) 100%),linear-gradient(100deg,#c6d3e5 0%,#d0dbea 25%,#c4d1e3 65%,#9dafc7 100%);box-shadow:3px 4px 5px rgba(0,0,0,0.5);opacity:0.94"></div><div class="a" style="left:630px;top:381px;width:131px;height:34px;border-radius:5px;background:linear-gradient(180deg,#e4edf9 0%,#dbe6f6 40%,#dde8f7 100%);border-top:2px solid #fff;border-left:1px solid #fff;box-shadow:0 0 3px 2px rgba(214,225,240,0.9);opacity:0.95"></div><div class="t" style="left:635px;top:391.5px;font-size:16px;transform-origin:0 0;transform:scaleX(0.982)">Gebäudepunkte</div>
<div class="a" style="left:637px;top:533px;width:128px;height:41px;border-radius:13px;border:1px solid #7b8da8;background:linear-gradient(180deg,rgba(120,140,170,.55) 0%,rgba(150,168,195,0) 14%,rgba(150,168,195,0) 70%,rgba(95,115,148,.55) 100%),linear-gradient(100deg,#c6d3e5 0%,#d0dbea 25%,#c4d1e3 65%,#9dafc7 100%);box-shadow:3px 4px 5px rgba(0,0,0,0.5);opacity:0.88"></div><div class="a" style="left:644px;top:539px;width:112px;height:27px;border-radius:5px;background:linear-gradient(180deg,#e4edf9 0%,#dbe6f6 40%,#dde8f7 100%);border-top:2px solid #fff;border-left:1px solid #fff;box-shadow:0 0 3px 2px rgba(214,225,240,0.9);opacity:0.95"></div><div class="t" style="left:650px;top:544.5px;font-size:16px;transform-origin:0 0;transform:scaleX(0.962)">Grenzpunkte</div>
<svg class="a" style="left:177px;top:199px" width="14" height="22" viewBox="0 0 14 22"><path d="M1.5 1.5 L1.5 17.5 L5.2 14 L8 20 L10.2 19 L7.5 13.2 L12.5 13.2 Z" fill="#fff" stroke="#000" stroke-width="1" stroke-linejoin="miter"/></svg>
</body></html>
